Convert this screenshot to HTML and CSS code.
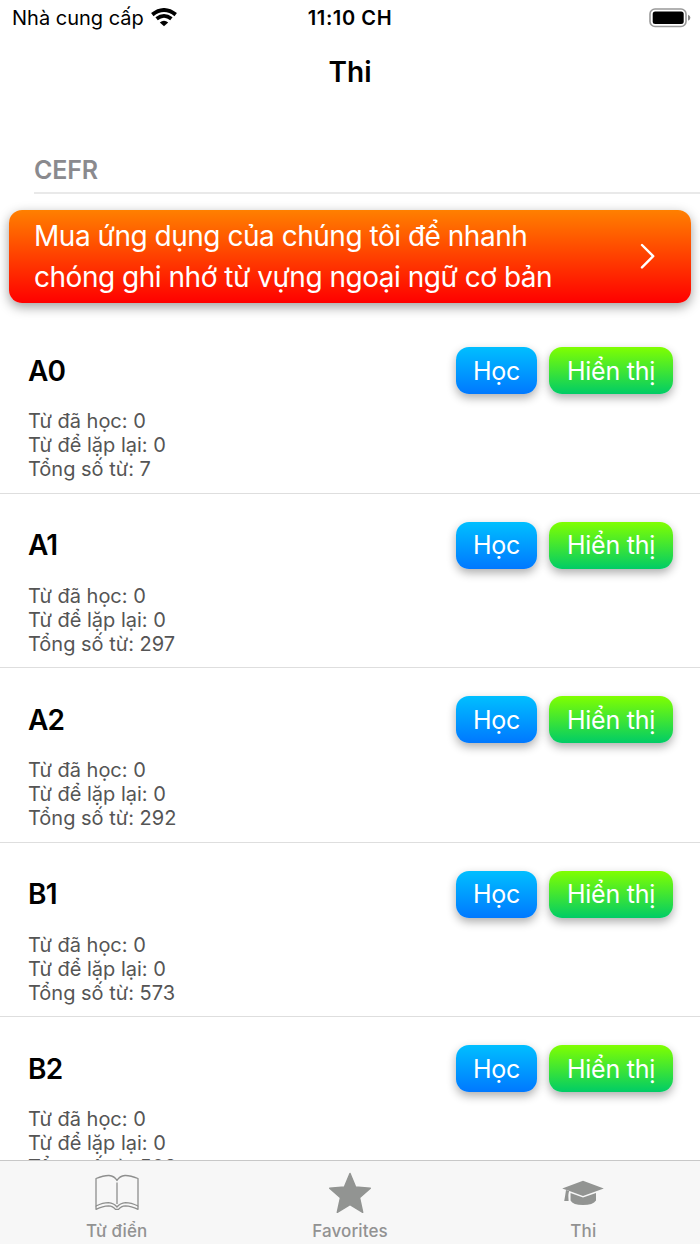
FILE: index.html
```html
<!DOCTYPE html>
<html lang="vi">
<head>
  <meta charset="UTF-8">
  <meta name="viewport" content="width=device-width, initial-scale=1.0">
  <title>Thi</title>
  <link rel="stylesheet" href="styles.css">
</head>
<body>
  <div class="app">
    <header class="status-bar">
      <div class="carrier">
        <span class="carrier-name">Nhà cung cấp</span>
        <svg class="wifi" width="26" height="20" viewBox="0 0 26 20">
          <path d="M1.3 6.6 Q13 -2.6 24.7 6.6" fill="none" stroke="#000" stroke-width="3.9"/>
          <path d="M5.6 10.8 Q13 4.8 20.4 10.8" fill="none" stroke="#000" stroke-width="3.7"/>
          <path d="M8.8 14.4 Q13 11.2 17.2 14.4 L13 18.2 Z" fill="#000"/>
        </svg>
      </div>
      <div class="clock">11:10 CH</div>
      <div class="battery">
        <svg width="42" height="20" viewBox="0 0 42 20">
          <rect x="1" y="1" width="36" height="17.5" rx="5" fill="none" stroke="#999" stroke-width="1.6"/>
          <rect x="3.7" y="3.6" width="31" height="12.4" rx="2.5" fill="#000"/>
          <path d="M39 6.8 Q41.4 7.8 41.4 9.8 Q41.4 11.8 39 12.8 Z" fill="#888"/>
        </svg>
      </div>
    </header>

    <h1 class="nav-title">Thi</h1>

    <main class="content">
      <h2 class="section-title">CEFR</h2>

      <a class="banner">
        <span class="banner-text">
          <span class="banner-line">Mua ứng dụng của chúng tôi để nhanh</span>
          <span class="banner-line">chóng ghi nhớ từ vựng ngoại ngữ cơ bản</span>
        </span>
        <svg class="chevron" width="16" height="28" viewBox="0 0 16 28">
          <path d="M2 3 L13.2 14.2 L2 25.4" fill="none" stroke="#fff" stroke-width="2.4" stroke-linecap="round" stroke-linejoin="round"/>
        </svg>
      </a>

      <!-- Levels -->
      <section class="level">
        <div class="level-head">
          <h3 class="level-name">A0</h3>
          <button class="btn btn-learn">Học</button>
          <button class="btn btn-show">Hiển thị</button>
        </div>
        <p class="stat">Từ đã học: 0</p>
        <p class="stat">Từ để lặp lại: 0</p>
        <p class="stat">Tổng số từ: 7</p>
      </section>

      <section class="level">
        <div class="level-head">
          <h3 class="level-name">A1</h3>
          <button class="btn btn-learn">Học</button>
          <button class="btn btn-show">Hiển thị</button>
        </div>
        <p class="stat">Từ đã học: 0</p>
        <p class="stat">Từ để lặp lại: 0</p>
        <p class="stat">Tổng số từ: 297</p>
      </section>

      <section class="level">
        <div class="level-head">
          <h3 class="level-name">A2</h3>
          <button class="btn btn-learn">Học</button>
          <button class="btn btn-show">Hiển thị</button>
        </div>
        <p class="stat">Từ đã học: 0</p>
        <p class="stat">Từ để lặp lại: 0</p>
        <p class="stat">Tổng số từ: 292</p>
      </section>

      <section class="level">
        <div class="level-head">
          <h3 class="level-name">B1</h3>
          <button class="btn btn-learn">Học</button>
          <button class="btn btn-show">Hiển thị</button>
        </div>
        <p class="stat">Từ đã học: 0</p>
        <p class="stat">Từ để lặp lại: 0</p>
        <p class="stat">Tổng số từ: 573</p>
      </section>

      <section class="level">
        <div class="level-head">
          <h3 class="level-name">B2</h3>
          <button class="btn btn-learn">Học</button>
          <button class="btn btn-show">Hiển thị</button>
        </div>
        <p class="stat">Từ đã học: 0</p>
        <p class="stat">Từ để lặp lại: 0</p>
        <p class="stat">Tổng số từ: 508</p>
      </section>
    </main>

    <nav class="tab-bar">
      <a class="tab">
        <svg class="tab-icon" width="46" height="46" viewBox="0 0 46 46">
          <g fill="none" stroke="#8e8f8e" stroke-width="1.3" stroke-linejoin="round">
            <path d="M23 10.5 Q20.5 6 15 5.5 Q10 5.3 2 8.5 V36 Q9 32.6 14.5 32.6 Q20 33 23 37 Q26 33 31.5 32.6 Q37 32.6 44 36 V8.5 Q36 5.3 31 5.5 Q25.5 6 23 10.5 Z"/>
            <path d="M23 12.5 V34"/>
            <path d="M2 36 V39.3 Q9 36 14.5 35.8 Q19 36 21.5 39.3 H24.5 Q27 36 31.5 35.8 Q37 36 44 39.3 V36"/>
          </g>
        </svg>
        <span class="tab-label">Từ điển</span>
      </a>
      <a class="tab">
        <svg class="tab-icon" width="46" height="46" viewBox="0 0 46 46">
          <path d="M23 3.5 L28.6 17 L43.3 18.3 L32.5 27.7 L35.7 42.3 L23 34.7 L10.3 42.3 L13.5 27.7 L2.7 18.3 L17.4 17 Z" fill="#929492" stroke="#929492" stroke-width="1.5" stroke-linejoin="round"/>
        </svg>
        <span class="tab-label">Favorites</span>
      </a>
      <a class="tab">
        <svg class="tab-icon" width="46" height="46" viewBox="0 0 46 46">
          <g fill="#929492">
            <path d="M23 10.7 L43.8 18.5 L23 26 L9.5 21 L2.2 18.5 Z"/>
            <path d="M10.5 22.9 L23 27.5 L36 22.9 V30.5 Q33 35 23 35 Q13 35 10.5 30.5 Z"/>
            <path d="M6 20 L9.3 21 Q7.9 23 8.6 31 H4.2 Q5 27 6 20 Z"/>
          </g>
          <path d="M9.6 21.8 V33" stroke="#f7f7f7" stroke-width="1"/>
        </svg>
        <span class="tab-label">Thi</span>
      </a>
    </nav>
  </div>
</body>
</html>
```
FILE: styles.css
```css
* {
  box-sizing: border-box;
  margin: 0;
  padding: 0;
}

body {
  font-family: Inter, "Noto Sans", sans-serif;
  background: #fff;
  color: #000;
}

.app {
  display: flex;
  flex-direction: column;
  width: 700px;
  height: 1244px;
  overflow: hidden;
}

.status-bar {
  display: grid;
  grid-template-columns: 1fr auto 1fr;
  height: 40px;
  padding: 0 9px 5px 12px;
  align-items: center;
  font-size: 20px;
}

.carrier {
  display: flex;
  align-items: center;
  gap: 7px;
  white-space: nowrap;
}

.clock {
  padding-right: 3px;
  font-weight: 600;
  letter-spacing: 0.6px;
}

.battery {
  display: flex;
  justify-content: flex-end;
}

.nav-title {
  height: 88px;
  padding-top: 14px;
  text-align: center;
  font-size: 28px;
  font-weight: 600;
  line-height: 36px;
}

.content {
  flex: 1;
  min-height: 0;
  overflow: hidden;
}

.section-title {
  height: 66px;
  margin-left: 34px;
  padding-top: 24px;
  border-bottom: 2px solid #e9e9e9;
  color: #8a8a8e;
  font-size: 25px;
  font-weight: 600;
  line-height: 36px;
  letter-spacing: -0.2px;
}

.banner {
  display: flex;
  align-items: center;
  justify-content: space-between;
  height: 93px;
  margin: 16px 9px;
  padding: 0 35px 0 25px;
  border-radius: 13px;
  background: linear-gradient(#ff8000, #ff0000);
  box-shadow: 0 4px 12px rgba(0, 0, 0, 0.38);
  color: #fff;
}

.banner-line {
  display: block;
  font-size: 28px;
  font-weight: 400;
  line-height: 41px;
  letter-spacing: -0.48px;
  white-space: nowrap;
}

.chevron {
  margin-bottom: 1px;
}

.level {
  height: 174.6px;
  padding: 28px 27px 0 28px;
  border-bottom: 1.5px solid #dedede;
}

.level-head {
  display: flex;
  align-items: center;
  height: 47px;
  margin-bottom: 15px;
}

.level-name {
  flex: 1;
  font-size: 28px;
  font-weight: 600;
  letter-spacing: -0.8px;
}

.btn {
  height: 47px;
  border: none;
  border-radius: 13px;
  box-shadow: 0 4px 10px rgba(0, 0, 0, 0.32);
  color: #fff;
  font-family: inherit;
  font-size: 25px;
  font-weight: 400;
  letter-spacing: -0.25px;
  white-space: nowrap;
}

.btn-learn {
  width: 81px;
  margin-right: 12px;
  background: linear-gradient(#00bfff, #0078ff);
}

.btn-show {
  width: 124px;
  background: linear-gradient(#80ff00, #00cc66);
}

.stat {
  color: #555;
  font-size: 20px;
  line-height: 24px;
}

.tab-bar {
  display: flex;
  height: 84px;
  border-top: 1px solid #c8c8c8;
  background: #f7f7f7;
}

.tab {
  flex: 1;
  display: flex;
  flex-direction: column;
  align-items: center;
  padding-top: 9px;
}

.tab-label {
  margin-top: 5px;
  color: #929292;
  font-size: 17px;
  font-weight: 500;
  line-height: 20px;
  letter-spacing: 0.1px;
}
```
